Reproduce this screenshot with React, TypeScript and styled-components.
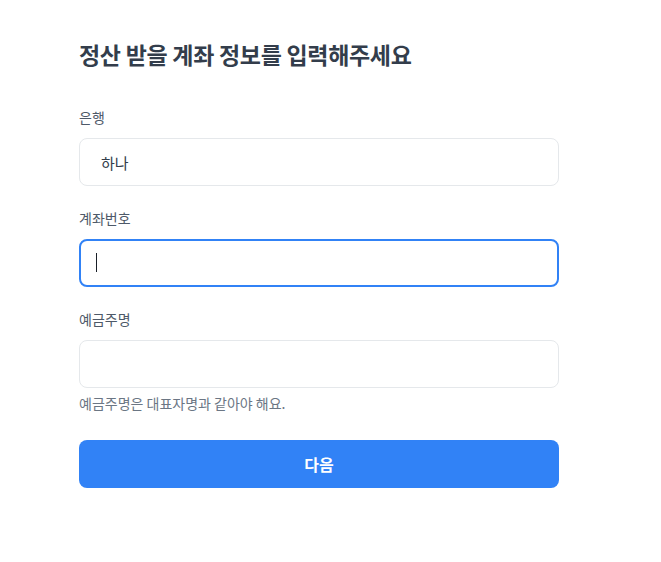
import React from 'react';
import styled, { createGlobalStyle } from 'styled-components';

const GlobalStyle = createGlobalStyle`
  html, body { margin: 0; padding: 0; background: #ffffff; }
  body { font-family: "Noto Sans CJK KR", "Noto Sans", sans-serif; -webkit-font-smoothing: antialiased; }
  * { box-sizing: border-box; }
`;

const Page = styled.div`
  width: 480px; margin-left: 79px; padding-top: 38px;
  display: flex; flex-direction: column;
`;

const Title = styled.h1`
  margin: 0 0 37px; font-size: 23px; line-height: 32px; font-weight: 700; color: #333d4b; letter-spacing: -0.3px;
`;

const Form = styled.form`
  display: flex; flex-direction: column;
`;

const Field = styled.div`
  display: flex; flex-direction: column; margin-bottom: 22px;
  &:last-of-type { margin-bottom: 0; }
`;

const Label = styled.label`
  font-size: 14px; line-height: 20px; color: #4e5968; margin-bottom: 11px;
`;

const InputWrap = styled.div`
  position: relative;
`;

const Input = styled.input<{ $focused?: boolean }>`
  width: 100%; height: 48px; padding: 0 21px; border-radius: 8px; outline: none;
  font-family: inherit; font-size: 15px; color: #333d4b; background: #fff;
  border: ${p => (p.$focused ? '2px solid #3182f6' : '1px solid #e5e8eb')};
  caret-color: transparent;
`;

const Caret = styled.span`
  position: absolute; left: 17px; top: 14px; width: 1px; height: 19px; background: #191f28;
`;

const Help = styled.p`
  margin: 5px 0 0; font-size: 14px; line-height: 20px; color: #6b7684;
`;

const SubmitButton = styled.button`
  margin-top: 27px; width: 100%; height: 48px; border: none; border-radius: 8px;
  background: #3182f6; color: #fff; font-family: inherit; font-size: 16px; font-weight: 700; cursor: pointer;
`;

export default function App() {
  return (
    <>
      <GlobalStyle />
      <Page>
        <Title>정산 받을 계좌 정보를 입력해주세요</Title>
        <Form onSubmit={e => e.preventDefault()}>
          <Field>
            <Label>은행</Label>
            <InputWrap>
              <Input defaultValue="하나" readOnly />
            </InputWrap>
          </Field>
          <Field>
            <Label>계좌번호</Label>
            <InputWrap>
              <Input $focused defaultValue="" />
              <Caret />
            </InputWrap>
          </Field>
          <Field>
            <Label>예금주명</Label>
            <InputWrap>
              <Input defaultValue="" />
            </InputWrap>
            <Help>예금주명은 대표자명과 같아야 해요.</Help>
          </Field>
          <SubmitButton type="submit">다음</SubmitButton>
        </Form>
      </Page>
    </>
  );
}
